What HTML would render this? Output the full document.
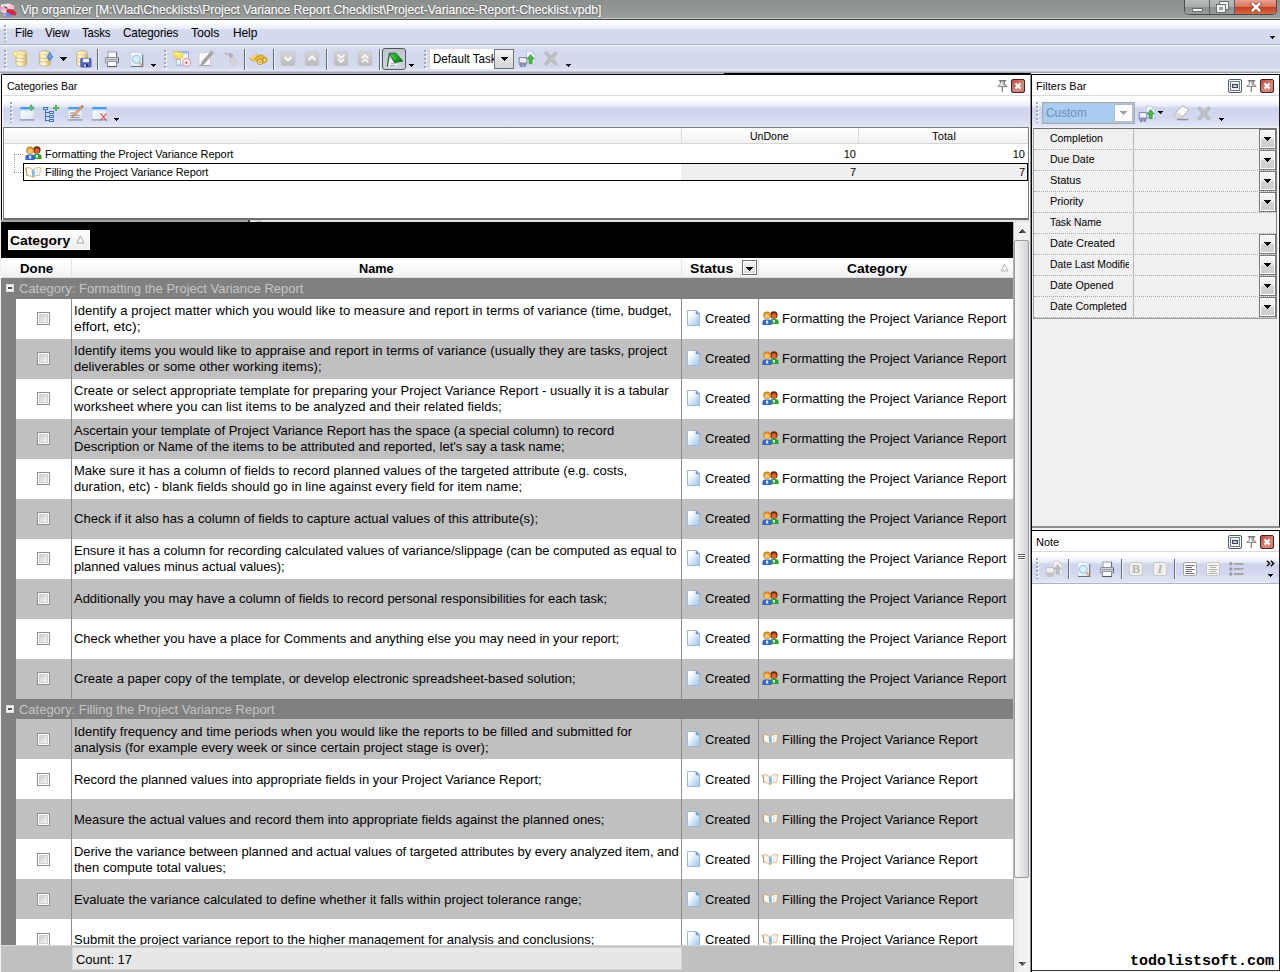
<!DOCTYPE html>
<html><head><meta charset="utf-8"><title>Vip organizer</title>
<style>
*{box-sizing:border-box;margin:0;padding:0}
html,body{width:1280px;height:972px;overflow:hidden}
body{position:relative;background:#f0f0f0;font-family:"Liberation Sans",sans-serif;font-size:11px;color:#000}
svg{display:block}
.tri,.tri7,.tri7g{position:absolute;background:#000}
.tri{width:5px;height:3px;clip-path:polygon(0 0,5px 0,5px 1px,4px 1px,4px 2px,3px 2px,3px 3px,2px 3px,2px 2px,1px 2px,1px 1px,0 1px)}
.tri7,.tri7g{width:7px;height:4px;clip-path:polygon(0 0,7px 0,7px 1px,6px 1px,6px 2px,5px 2px,5px 3px,4px 3px,4px 4px,3px 4px,3px 3px,2px 3px,2px 2px,1px 2px,1px 1px,0 1px)}
.tri7g{background:#a0a0a0}
.grip{position:absolute;width:3px;background:repeating-linear-gradient(to bottom,#a2a8c2 0,#a2a8c2 2px,transparent 2px,transparent 4px) 0 0/2px 100% no-repeat,repeating-linear-gradient(to bottom,transparent 0,transparent 1px,#fff 1px,#fff 3px,transparent 3px,transparent 4px) 1px 0/2px 100% no-repeat}
.ic{position:absolute}
.sep{position:absolute;width:1px;background:#606880;box-shadow:1px 0 0 #f6f7fc}

/* title */
#title{position:absolute;left:0;top:0;width:1280px;height:20px;background:linear-gradient(to bottom,#898e8d 0,#9b9f9e 18px,#c4c8c8 18px,#c4c8c8 19px,#454747 19px)}
#title .appico{position:absolute;left:0;top:1px}
#title .tt{position:absolute;left:21px;top:2px;-webkit-text-stroke:0.25px #fff;font-size:13px;line-height:16px;color:#fff;white-space:nowrap;text-shadow:0 0 2px #444,0 1px 1px #555}
.winbtns{position:absolute;left:1184px;top:0;width:93px;height:15px;border:1px solid #4c4e4e;border-top:none;border-radius:0 0 5px 5px;overflow:hidden;background:#a4a8a8}
.wb{position:absolute;top:0;height:14px}
.wb.min{left:0;width:25px;background:linear-gradient(to bottom,#b8bcbc 0,#a8acac 7px,#8c9090 7px,#9a9e9e 14px);border-right:1px solid #606464}
.wb.min i{position:absolute;left:7px;top:8px;width:11px;height:4px;background:#f4f4f4;border:1px solid #6c7070}
.wb.rest{left:25px;width:25px;background:linear-gradient(to bottom,#b8bcbc 0,#a8acac 7px,#8c9090 7px,#9a9e9e 14px);border-right:1px solid #606464}
.wb.rest i{position:absolute;border:2px solid #f4f4f4;outline:1px solid #6c7070}
.wb.rest i.a{left:10px;top:2px;width:8px;height:7px}
.wb.rest i.b{left:7px;top:5px;width:8px;height:7px;background:#9ca0a0}
.wb.cls{left:50px;width:42px;background:linear-gradient(to bottom,#e8a090 0,#d8705a 7px,#c43c1c 7px,#d86a48 14px)}
.wb.cls svg{position:absolute;left:15px;top:2px}

/* menu */
#menu{position:absolute;left:0;top:20px;width:1280px;height:26px;background:linear-gradient(to bottom,#ffffff 0,#fafbfe 3px,#eceff9 8px,#d4d9ee 10px,#d4d9ee 24px,#aab0c6 24px,#aab0c6 25px,#f8f9fd 25px)}
.mi{position:absolute;top:5px;font-size:13px;line-height:16px;letter-spacing:-0.1px;white-space:nowrap}

/* toolbar */
#tbar{position:absolute;left:0;top:46px;width:1280px;height:28px;background:linear-gradient(to bottom,#dfe3f3 0,#d4d9ee 4px,#d4d9ee 21px,#e6e9f6 25px,#a0a4b4 26px,#a0a4b4 27px,#f0f0f4 27px)}
.pressed{position:absolute;width:24px;height:22px;border:1px solid #50545c;border-radius:3px;background:linear-gradient(to bottom,#c0c4d0,#d0d6e0);padding:0}
.combo1{position:absolute;left:430px;top:3px;width:84px;height:20px;background:#fff;overflow:hidden}
.combo1 span{position:absolute;left:3px;top:2px;font-size:13px;line-height:16px;white-space:nowrap}
.cbtn{position:absolute;left:64px;top:0;width:20px;height:20px;border:1px solid #707478;background:linear-gradient(to bottom,#f4f4f4,#d4d4d4)}

/* panels */
.panel{position:absolute;background:#fff;border:1px solid #000;border-right-color:#1c1c1c;border-bottom-color:#6c6c6c}
.phead{position:absolute;left:0;top:0;right:0;height:21px;background:#fff;border-bottom:1px solid #d9d9dd}
.pt{position:absolute;left:4px;top:5px;font-size:11px;line-height:13px;white-space:nowrap}
.pin,.pclose,.pmax{position:absolute;top:4px;width:14px;height:14px}
.pin{width:12px;top:5px}
.pclose{background:linear-gradient(135deg,#bc4c48,#d48c80 65%,#cc7468);border:1px solid #4e211a;border-radius:2px}
.pclose svg{margin:0}
.pmax{border:1px solid #505c6c;border-radius:2px;background:#f4f6fa;box-shadow:inset 0 0 0 1px #fff,inset 0 0 0 2px #6c7888}
.pmax svg{margin:0}
.ptool{position:absolute;left:0;top:21px;right:0;height:31px;background:linear-gradient(to bottom,#ffffff 0,#ffffff 4px,#e7ecf7 10px,#d0d5ee 12px,#d3d8ef 22px,#e3e8f6 31px)}

#catp{left:2px;top:74px;width:1029px;height:146px;border-right-color:#fff;border-left-color:#fff;border-bottom:none;box-shadow:-1px 0 0 #000,0 -1px 0 #b8b8bc}
.ctree{position:absolute;left:0;top:52px;width:1026px;height:93px;border:1px solid #7c7c7c;border-bottom:2px solid #707070;background:#fff}
.chead{position:absolute;left:0;top:0;right:0;height:16px;background:linear-gradient(to bottom,#ffffff,#f1f1f1);border-bottom:1px solid #d4d4d4}
.chead div{position:absolute;top:0;height:15px;font-size:11px;line-height:17px;text-align:center;border-right:1px solid #dcdcdc}
.chead .c1{left:0;width:678px}
.chead .c2{left:678px;width:177px}
.chead .c2 span{position:absolute;left:68px;top:0}
.chead .c3 span{position:absolute;left:73px;top:0}
.chead .c3{left:855px;width:171px;border-right:none}
.trow{position:absolute;left:19px;right:0;height:18px}
.trow.r1{top:17px}
.trow.r2{top:35px;border:1px solid #000}
.trow .ti{position:absolute;left:2px;top:1px}
.trow.r2 .ti{left:1px;top:1px}
.trow .tx{position:absolute;left:22px;top:3px;font-size:11px;line-height:13px;white-space:nowrap}
.trow.r2 .tx{left:21px;top:2px}
.trow .n1,.trow .n2{position:absolute;top:3px;font-size:11px;line-height:13px;text-align:right;width:60px}
.trow .n1{left:773px}
.trow .n2{left:942px}
.trow.r2 .n1,.trow.r2 .n2{top:2px;margin-left:-1px}
.selbg{position:absolute;left:657px;top:0;right:0;bottom:0;background:#efefef}
.tl1{position:absolute;left:10px;top:26px;width:9px;border-top:1px dotted #a0a0a0}
.tl2{position:absolute;left:10px;top:26px;height:18px;border-left:1px dotted #a0a0a0}
.tl3{position:absolute;left:10px;top:44px;width:9px;border-top:1px dotted #a0a0a0}

/* grid */
#grid{position:absolute;left:2px;top:220px;width:1029px;height:752px;background:#c0c0c0;overflow:hidden;background:linear-gradient(to right,#a4a4a4 0,#a4a4a4 246px,#404040 246px,#404040 248px,#e8e8ec 248px,#c8c8cc 258px,#e3e3e8 260px) 0 0/100% 2px no-repeat,#c0c0c0}
.gbar{position:absolute;left:0;top:2px;width:1011px;height:36px;background:#000}
.gbox{position:absolute;left:6px;top:8px;width:82px;height:20px;background:linear-gradient(to bottom,#fff,#ececec);border:1px solid #fff}
.gbox span{position:absolute;left:1px;top:2px;font-size:13px;font-weight:bold;line-height:16px}
.gbox svg{position:absolute;left:67px;top:4px}
.ghead{position:absolute;left:0;top:38px;width:1011px;height:20px;background:linear-gradient(to bottom,#ffffff,#fafafa 50%,#f0f0f0);border-bottom:1px solid #dcdcdc}
.ghead .h{position:absolute;top:0;height:19px;font-size:13px;font-weight:bold;line-height:19px;text-align:center;border-right:1px solid #e4e4e4}
.hd{left:0;width:70px}
.hn{left:70px;width:610px}
.hs{left:680px;width:77px}
.hc{left:757px;width:254px;border-right:none !important}
.hd span{position:absolute;left:18px;top:2px;line-height:17px}
.hn span{position:absolute;left:287px;top:2px;line-height:17px}
.hs span{position:absolute;left:8px;top:2px;line-height:17px}
.hc span{position:absolute;left:88px;top:2px;line-height:17px}
.fbtn{position:absolute;left:60px;top:2px;width:15px;height:15px;border:1px solid #707070;background:linear-gradient(to bottom,#f4f4f4,#dcdcdc);box-shadow:inset 0 0 0 1px #fff}
.srt{position:absolute;left:241px;top:5px}
.gbody{position:absolute;left:0;top:0;width:1011px;height:726px;overflow:hidden}
.grp{position:absolute;left:0;width:1011px;height:21px;background:#808080;color:#c4c4c4;font-size:13px;line-height:20px}
.grp span{position:absolute;left:17px;top:1px;white-space:nowrap}
.minus{position:absolute;left:4px;top:6px;width:8px;height:8px;background:#f4f4f4;border:1px solid #dcdcdc}
.minus i{position:absolute;left:1px;top:2px;width:4px;height:2px;background:#505050}
.row{position:absolute;left:0;width:1011px;height:40px;background:#fff;border-left:14px solid #808080}
.row.alt{background:#c0c0c0}
.row>div{position:absolute;top:0;height:40px;border-right:1px solid #8c8c8c}
.cd{left:0;width:56px}
.cn{left:56px;width:610px}
.cs{left:666px;width:77px}
.cc{left:743px;width:254px;border-right:none !important}
.cb{position:absolute;left:21px;top:13px;width:13px;height:13px;border:1px solid #8e8f8f;background:linear-gradient(135deg,#cccccc 20%,#f6f6f6 80%);box-shadow:inset 0 0 0 1px #fff,inset 0 0 0 2px #cfcfcf}
.nt{position:absolute;left:2px;top:0;height:40px;display:flex;flex-direction:column;justify-content:center;font-size:13px;line-height:16px;white-space:nowrap}
.nt br{display:none}
.ln{display:block}
.cs .doc{position:absolute;left:5px;top:11px}
.cs span{position:absolute;left:23px;top:12px;font-size:13px;line-height:16px}
.cc .ci{position:absolute;left:3px;top:12px}
.cc span{position:absolute;left:23px;top:12px;font-size:13px;line-height:16px;white-space:nowrap}
.gfoot{position:absolute;left:0;top:725px;width:1011px;height:27px;background:#c0c0c0;border-top:1px solid #d8d8d8}
.cnt{position:absolute;left:70px;top:1px;width:610px;height:23px;background:#e6e8e8;border:1px solid #d4d4d4;font-size:13px;line-height:23px;padding-left:3px}
.vsb{position:absolute;left:1011px;top:2px;width:18px;height:750px;background:linear-gradient(to right,#e8e8e8,#f2f2f2 30%,#f0f0f0);border-left:1px solid #b4b4b4}
.vsb .up,.vsb .dn{position:absolute;left:5px;width:7px;height:4px}
.vsb .up{top:7px;background:linear-gradient(to right,#202020,#707070);clip-path:polygon(3px 0,4px 0,4px 1px,5px 1px,5px 2px,6px 2px,6px 3px,7px 3px,7px 4px,0 4px,0 3px,1px 3px,1px 2px,2px 2px,2px 1px,3px 1px)}
.vsb .dn{top:740px;background:linear-gradient(to right,#303030,#808080);clip-path:polygon(0 0,7px 0,7px 1px,6px 1px,6px 2px,5px 2px,5px 3px,4px 3px,4px 4px,3px 4px,3px 3px,2px 3px,2px 2px,1px 2px,1px 1px,0 1px)}
.thumb{position:absolute;left:0;top:18px;width:15px;height:638px;border:1px solid #9a9a9a;border-radius:2px;background:linear-gradient(to right,#f6f6f6,#e6e6e8 50%,#d2d2d8)}
.thumb .gr{position:absolute;left:3px;top:313px;width:7px}
.thumb .gr i{display:block;height:1px;background:#606060;margin-bottom:1px;box-shadow:0 1px 0 #fff}

/* filters */
#filp{left:1031px;top:74px;width:249px;height:454px;background:#f0f0f0;border-bottom:2px solid #909090;box-shadow:-1px 0 0 #8c8c8c,inset -1px 0 0 #fff}
.combo2{position:absolute;left:10px;top:6px;width:93px;height:22px;border:1px solid #a4acb4;box-shadow:inset 0 0 0 1px #b4c4d8;background:#a8ccf2}
.combo2 span{position:absolute;left:3px;top:2px;font-size:13px;line-height:16px;color:#7390b2}
.cbtn2{position:absolute;left:71px;top:1px;width:19px;height:18px;background:#fcfcfc;border:1px solid #b8bcc0}
.fgrid{position:absolute;left:1px;top:53px;width:244px;height:191px;border:1px solid #9c9c9c;border-top:1px solid #707070;border-right-color:#808080;background:#f0f0f0}
.frow{position:absolute;left:0;width:242px;height:21px;border-bottom:1px dotted #a8a8a8}
.fl{position:absolute;left:16px;top:3px;width:79px;overflow:hidden;font-size:11px;line-height:13px;white-space:nowrap}
.fb{position:absolute;left:225px;top:0;width:17px;height:20px;border:1px solid #787878;background:linear-gradient(to bottom,#f6f6f6 0,#ececec 50%,#d4d4d4 50%,#cccccc);box-shadow:inset 0 0 0 1px #fff}
.fsep{position:absolute;left:99px;top:0;width:1px;height:189px;background:#b8b8b8}

/* note */
#notep{left:1031px;top:530px;width:249px;height:441px;border-bottom-color:#404040;box-shadow:-1px 0 0 #8c8c8c}
.nbody{position:absolute;left:0;top:52px;right:0;bottom:0;background:#fff;border-top:1px solid #b0b4c4}
.chev{position:absolute;left:234px;top:9px}
.wm{position:absolute;left:98px;top:422px;font-family:"Liberation Mono",monospace;font-weight:bold;font-size:15px;line-height:17px;white-space:nowrap}
#splitgrip{position:absolute;left:1017px;top:555px;width:7px}
#splitgrip i{display:none}

#lstrip{position:absolute;left:1px;top:220px;width:1px;height:752px;background:linear-gradient(to bottom,#a8a8a8 0,#a8a8a8 2px,#000 2px,#000 38px,#f8f8f8 38px,#f8f8f8 58px,#808080 58px,#808080 725px,#c4c4c4 725px)}
.g2 .nt{top:1px}
.g2 .cb{top:14px}
.g2 .cs .doc{top:12px}
.g2 .cs span,.g2 .cc span{top:13px}
.g2 .cc .ci{top:13px}
#tline{position:absolute;left:724px;top:73px;width:307px;height:1px;background:#000}
#vline{position:absolute;left:1030px;top:74px;width:2px;height:898px;background:linear-gradient(to right,#8c8c8c 0,#8c8c8c 1px,#000 1px)}

</style></head>
<body>
<svg width="0" height="0" style="position:absolute"><defs><linearGradient id="gCyl" x1="0" y1="0" x2="1" y2="0"><stop offset="0" stop-color="#e9d9a0"/><stop offset="0.3" stop-color="#fdf9e4"/><stop offset="0.65" stop-color="#f3e3a8"/><stop offset="1" stop-color="#c9aa62"/></linearGradient><linearGradient id="gTop" x1="0" y1="0" x2="1" y2="0"><stop offset="0" stop-color="#fffbe8"/><stop offset="1" stop-color="#ecd998"/></linearGradient><linearGradient id="gD" x1="0" y1="0" x2="1" y2="1"><stop offset="0.25" stop-color="#ffffff"/><stop offset="1" stop-color="#98c4ec"/></linearGradient><linearGradient id="gBtn" x1="0" y1="0" x2="0" y2="1"><stop offset="0" stop-color="#d6d6d6"/><stop offset="0.5" stop-color="#c6c6c6"/><stop offset="1" stop-color="#bcbcbc"/></linearGradient><linearGradient id="gGrn" x1="0" y1="0" x2="1" y2="1"><stop offset="0" stop-color="#3cc43c"/><stop offset="1" stop-color="#0c7c14"/></linearGradient><linearGradient id="gPg" x1="0" y1="0" x2="1" y2="1"><stop offset="0" stop-color="#ffffff"/><stop offset="1" stop-color="#dce6f2"/></linearGradient></defs></svg>
<div id="title"><div class="appico"><svg width="17" height="17" viewBox="0 0 17 17"><path d="M1 3.5 L9 2.5 L14.5 5 L13 9 L5 13 L0.5 10 Z" fill="#f6dcea"/><path d="M0.5 6 L4 5.5 L5 9.5 L1 10 Z" fill="#f0a8bc"/><path d="M3.5 5 L7.5 6.2 L6 8.2 Z" fill="#5c5060"/><path d="M7 7.6 L13 8.4 L16.4 12 L15.6 14.4 L10 13.4 L6.2 11 Z" fill="#d42c3c"/><path d="M9.4 4.4 L14 5 L14.6 7.6 L10.6 7.6 Z" fill="#f4b8c0"/><path d="M3 12 L8 11.6 L12.4 14.4 L10 15.8 L5 15.6 Z" fill="#7c84d4"/><path d="M3.4 12.4 L6 13.6 L4.6 15.2 Z" fill="#d8c8f0"/></svg></div><span class="tt" style="display:inline-block;transform-origin:0 0;transform:scaleX(0.9331);">Vip organizer [M:\Vlad\Checklists\Project Variance Report Checklist\Project-Variance-Report-Checklist.vpdb]</span><div class="winbtns"><div class="wb min"><i></i></div><div class="wb rest"><i class="a"></i><i class="b"></i></div><div class="wb cls"><svg width="12" height="10" viewBox="0 0 12 10"><path d="M2.8 2 L9.2 8.2 M9.2 2 L2.8 8.2" stroke="#7c3424" stroke-opacity="0.75" stroke-width="4.2" stroke-linecap="square"/><path d="M2.8 2 L9.2 8.2 M9.2 2 L2.8 8.2" stroke="#fff" stroke-width="2.7" stroke-linecap="square"/></svg></div></div></div>
<div id="menu"><div class="grip" style="left:4px;top:5px;height:17px"></div><span class="mi" style="display:inline-block;transform-origin:0 0;transform:scaleX(0.8782);left:15.0px;">File</span><span class="mi" style="display:inline-block;transform-origin:0 0;transform:scaleX(0.8872);left:45.0px;">View</span><span class="mi" style="display:inline-block;transform-origin:0 0;transform:scaleX(0.8606);left:82.4px;">Tasks</span><span class="mi" style="display:inline-block;transform-origin:0 0;transform:scaleX(0.8938);left:123.0px;">Categories</span><span class="mi" style="display:inline-block;transform-origin:0 0;transform:scaleX(0.9486);left:191.3px;">Tools</span><span class="mi" style="display:inline-block;transform-origin:0 0;transform:scaleX(0.9196);left:232.5px;">Help</span><div class="tri" style="left:1270px;top:16px"></div></div>
<div id="tbar"><div class="grip" style="left:4px;top:4px;height:19px"></div><div class="ic" style="left:11px;top:3px"><svg width="18" height="19" viewBox="0 0 18 19"><path d="M4.8 4 C4.8 1 15.6 1 15.6 4 V15 C15.6 18 4.8 18 4.8 15 Z" fill="url(#gCyl)" stroke="#c3a55e" stroke-opacity="0.75" stroke-width="0.8"/><ellipse cx="10.2" cy="4" rx="5.1" ry="2" fill="url(#gTop)" stroke="#cdb270" stroke-opacity="0.8" stroke-width="0.6"/><path d="M4.8 8 C6.8 10 13.6 10 15.6 8 M4.8 11.6 C6.8 13.6 13.6 13.6 15.6 11.6" fill="none" stroke="#cbb070" stroke-opacity="0.75" stroke-width="0.9"/><path d="M4.5 1 L5.5 4.2 L9 5 L5.5 6 L4.5 9 L3.5 6 L0.3 5 L3.5 4.2 Z" fill="#fbe94a" stroke="#f0d040" stroke-opacity="0.7" stroke-width="0.6"/><circle cx="4.5" cy="5" r="1.3" fill="#fffad0"/></svg></div><div class="ic" style="left:37px;top:3px"><svg width="18" height="19" viewBox="0 0 18 19"><path d="M2.4 4 C2.4 1 13.2 1 13.2 4 V15 C13.2 18 2.4 18 2.4 15 Z" fill="url(#gCyl)" stroke="#c3a55e" stroke-opacity="0.75" stroke-width="0.8"/><ellipse cx="7.8" cy="4" rx="5.1" ry="2" fill="url(#gTop)" stroke="#cdb270" stroke-opacity="0.8" stroke-width="0.6"/><path d="M2.4 8 C4.4 10 11.2 10 13.2 8 M2.4 11.6 C4.4 13.6 11.2 13.6 13.2 11.6" fill="none" stroke="#cbb070" stroke-opacity="0.75" stroke-width="0.9"/><path d="M12.8 3 L16 8.3 H14.2 V11 H11.6 V8.3 H10 Z" fill="#6a9ae0" stroke="#3c68b8" stroke-width="0.6"/></svg></div><div class="tri7" style="left:60px;top:11px"></div><div class="ic" style="left:75px;top:3px"><svg width="18" height="19" viewBox="0 0 18 19"><path d="M1.6 4 C1.6 1 12.4 1 12.4 4 V15 C12.4 18 1.6 18 1.6 15 Z" fill="url(#gCyl)" stroke="#c3a55e" stroke-opacity="0.75" stroke-width="0.8"/><ellipse cx="7.0" cy="4" rx="5.1" ry="2" fill="url(#gTop)" stroke="#cdb270" stroke-opacity="0.8" stroke-width="0.6"/><path d="M1.6 8 C3.6 10 10.4 10 12.4 8 M1.6 11.6 C3.6 13.6 10.4 13.6 12.4 11.6" fill="none" stroke="#cbb070" stroke-opacity="0.75" stroke-width="0.9"/><rect x="5.8" y="9.4" width="10.2" height="8.6" rx="0.6" fill="#5c68c4" stroke="#40489c" stroke-width="0.8"/><rect x="7.8" y="9.6" width="6.2" height="3.6" fill="#eef0fa"/><rect x="8.6" y="14.8" width="4.4" height="3.2" fill="#30387c"/><rect x="9.2" y="15.4" width="1.6" height="2.4" fill="#e0e4f4"/></svg></div><div class="sep" style="left:97px;top:3px;height:21px"></div><div class="ic" style="left:104px;top:3px"><svg width="16" height="19" viewBox="0 0 16 19"><rect x="4" y="3" width="8.4" height="5.4" fill="#fdfdfd" stroke="#8c94a0" stroke-width="0.9"/><path d="M1.4 8.6 H14.4 V14 H1.4 Z" fill="#dfe1e6" stroke="#808894" stroke-width="0.9"/><path d="M1.8 10.6 H14" stroke="#a0a6b0" stroke-width="1.3"/><path d="M12.6 3 V8 M14.5 8.6 V14" stroke="#5c646c" stroke-width="0.9"/><rect x="3.6" y="12.4" width="9" height="5" fill="#fff" stroke="#7c848e" stroke-width="0.9"/><path d="M3.4 17.5 H12.8" stroke="#505860" stroke-width="1.1"/></svg></div><div class="ic" style="left:129px;top:3px"><svg width="16" height="19" viewBox="0 0 16 19"><path d="M1.8 3.2 H10 L13.6 6.2 V17.4 H1.8 Z" fill="url(#gPg)" stroke="#c0c8d8" stroke-width="0.8"/><path d="M13.7 5.5 V17.5 H2" stroke="#687080" stroke-width="1.1" fill="none"/><circle cx="7.3" cy="10.3" r="3.9" fill="#d6ecf8" fill-opacity="0.9" stroke="#a0cce8" stroke-width="1.3"/><path d="M10.2 13.4 L13 16.8" stroke="#e0a868" stroke-width="1.7"/></svg></div><div class="tri" style="left:151px;top:18px"></div><div class="grip" style="left:164px;top:4px;height:19px"></div><div class="ic" style="left:173px;top:3px"><svg width="19" height="19" viewBox="0 0 19 19"><rect x="5.5" y="2.6" width="10" height="13.6" fill="#fafcff" stroke="#8ca8d8" stroke-width="0.9"/><rect x="5.5" y="2.6" width="10" height="2.2" fill="#9cc0f0"/><path d="M1 2.4 H5 L6 3.8 H9.8 V9.2 H1 Z" fill="#f8e264" stroke="#e4c444" stroke-width="0.8"/><path d="M1.4 4.8 H9.4" stroke="#fdf6b0" stroke-width="1"/><rect x="3.2" y="10.4" width="4.4" height="5.6" fill="#eef3fc" stroke="#8ca8d8" stroke-width="0.7"/><circle cx="13.6" cy="13.4" r="3.9" fill="#fef8fa" stroke="#eca4b4" stroke-width="1.4"/><circle cx="13.4" cy="13.6" r="1.2" fill="#d84860"/></svg></div><div class="ic" style="left:197px;top:3px"><svg width="18" height="19" viewBox="0 0 18 19"><rect x="2" y="3.6" width="11.4" height="12.8" fill="#f8f8f8" stroke="#cfcfcf" stroke-width="0.9"/><path d="M2 16.6 H13.6" stroke="#a8a8a8" stroke-width="1"/><path d="M14.6 2 L16.6 3.8 L7 15 L4 16 L4.8 13 Z" fill="#a4a4a4" stroke="#8e8e8e" stroke-width="0.6"/><path d="M14 3 L15.8 4.6" stroke="#d0d0d0" stroke-width="0.9"/></svg></div><div class="ic" style="left:221px;top:3px"><svg width="18" height="19" viewBox="0 0 18 19"><path d="M2.5 4.5 L5 2.8 L7 4.2 L5.5 6.8 Z" fill="#c0c0c0"/><path d="M6.5 5 L9.5 3.4 L12.5 6 L11 9 L8.5 8.6 Z" fill="#b4b4b4"/><path d="M8.6 9.4 L14 8.4 L15.4 15.4 L10.4 16.8 Z" fill="#dcdcdc" stroke="#c4c4c4" stroke-width="0.8"/><path d="M10.2 11 L13.6 10.4 M10.8 13.4 L14.2 12.8" stroke="#c8c8c8" stroke-width="0.8"/></svg></div><div class="sep" style="left:244px;top:3px;height:21px"></div><div class="ic" style="left:249px;top:3px"><svg width="19" height="19" viewBox="0 0 19 19"><path d="M0.6 10 L7.4 5.4 L11 7.4 L4.4 12.4 Z" fill="#f2cc54" stroke="#c4962a" stroke-width="0.7"/><path d="M5.6 9.2 L12.4 5.6 L18 9.6 L16.4 13.6 L10.4 15 Z" fill="#e8b838" stroke="#b8881c" stroke-width="0.7"/><path d="M2 9.6 L7.6 6" stroke="#fbe890" stroke-width="1.2"/><ellipse cx="10.8" cy="12.8" rx="2.6" ry="2.8" fill="#f8e490" stroke="#b48418" stroke-width="0.8"/><ellipse cx="15.8" cy="11" rx="1.9" ry="2.6" fill="#f4d870" stroke="#b48418" stroke-width="0.8"/><ellipse cx="10.8" cy="12.8" rx="1.1" ry="1.3" fill="#d8a830"/></svg></div><div class="sep" style="left:273px;top:3px;height:21px"></div><div class="ic" style="left:280px;top:3px"><svg width="16" height="19" viewBox="0 0 16 19"><rect x="1.2" y="3" width="13.6" height="13.4" rx="2" fill="url(#gBtn)" stroke="#c2c2c2" stroke-width="0.8"/><path d="M4.6 8 L8 11.4 L11.4 8" stroke="#fafafa" stroke-width="2.1" fill="none"/></svg></div><div class="ic" style="left:304px;top:3px"><svg width="16" height="19" viewBox="0 0 16 19"><rect x="1.2" y="3" width="13.6" height="13.4" rx="2" fill="url(#gBtn)" stroke="#c2c2c2" stroke-width="0.8"/><path d="M4.6 11 L8 7.6 L11.4 11" stroke="#fafafa" stroke-width="2.1" fill="none"/></svg></div><div class="sep" style="left:326px;top:3px;height:21px"></div><div class="ic" style="left:333px;top:3px"><svg width="16" height="19" viewBox="0 0 16 19"><rect x="1.2" y="3" width="13.6" height="13.4" rx="2" fill="url(#gBtn)" stroke="#c2c2c2" stroke-width="0.8"/><path d="M4.8 5.8 L8 9 L11.2 5.8 M4.8 9.8 L8 13 L11.2 9.8" stroke="#fafafa" stroke-width="1.8" fill="none"/></svg></div><div class="ic" style="left:357px;top:3px"><svg width="16" height="19" viewBox="0 0 16 19"><rect x="1.2" y="3" width="13.6" height="13.4" rx="2" fill="url(#gBtn)" stroke="#c2c2c2" stroke-width="0.8"/><path d="M4.8 9.4 L8 6.2 L11.2 9.4 M4.8 13.4 L8 10.2 L11.2 13.4" stroke="#fafafa" stroke-width="1.8" fill="none"/></svg></div><div class="sep" style="left:379px;top:3px;height:21px"></div><div class="pressed" style="left:382px;top:2px"><svg width="22" height="20" viewBox="0 0 22 20"><path d="M5.6 8 L11.6 13.4 L15.4 15.2 L13 17 L4.4 17.6 Z" fill="#f2f6f6" fill-opacity="0.9"/><path d="M8.2 14.6 L13.4 14 M7 16.6 L12 16.2" stroke="#8c98a4" stroke-width="0.8"/><path d="M6.4 4.4 L4.3 17.6" stroke="#1c4c1c" stroke-width="1.1" fill="none"/><path d="M6.4 4.3 L12.6 4 L19.8 12 L11.6 13.6 Z" fill="url(#gGrn)" stroke="#106418" stroke-width="0.9"/><path d="M8.2 5.6 L12.6 10.6" stroke="#4cd04c" stroke-width="2" stroke-opacity="0.6"/></svg></div><div class="tri" style="left:409px;top:18px"></div><div class="grip" style="left:424px;top:4px;height:19px"></div><div class="combo1"><span style="display:inline-block;transform-origin:0 0;transform:scaleX(0.8906);">Default Task</span><div class="cbtn"><div class="tri7" style="left:6px;top:7px"></div></div></div><div class="ic" style="left:518px;top:3px"><svg width="18" height="19" viewBox="0 0 18 19"><path d="M8.6 2 H14.2 L17 4.8 V15 H10 L8.6 12 Z" fill="#eef4fb" stroke="#b4c0d4" stroke-width="0.7"/><path d="M14.2 2 V4.8 H17" fill="none" stroke="#b4c0d4" stroke-width="0.7"/><path d="M12.6 5.6 L16.2 10 H14.2 V14.4 H11 V10 H9 Z" fill="#4cb84c" stroke="#2c9038" stroke-width="0.7"/><path d="M1.2 8.6 H8.8 V14.4 L7 17.6 H5.8 V14.8 H4 V17.6 H2.6 L1.2 14.4 Z" fill="#f0f1f8" stroke="#646c9c" stroke-opacity="0.9" stroke-width="0.9"/><path d="M1.6 13.6 L2.8 17.2 H3.8 V14.4 H6 V17.2 H6.8 L8.4 13.6" fill="#646c9c" fill-opacity="0.8"/></svg></div><div class="ic" style="left:543px;top:2px"><svg width="16" height="19" viewBox="0 0 16 19"><path d="M3.4 5.4 L12.6 15.6 M12.6 5.4 L3.4 15.6" stroke="#9c9c9c" stroke-opacity="0.55" stroke-width="3.8" stroke-linecap="round"/><path d="M3.4 5.4 L12.6 15.6 M12.6 5.4 L3.4 15.6" stroke="#c0c0c0" stroke-width="2.2" stroke-linecap="round"/></svg></div><div class="tri" style="left:566px;top:18px"></div></div>
<div id="catp" class="panel"><div class="phead"><span class="pt" style="display:inline-block;transform-origin:0 0;transform:scaleX(0.9581);">Categories Bar</span><div class="pin" style="left:994px"><svg width="12" height="13" viewBox="0 0 12 13"><path d="M3.4 1 V3.8 L0.8 6.4 H10.2 L7.6 3.8 V1 Z" fill="#f4f4f4" stroke="#787878" stroke-width="0.9"/><path d="M6.3 1.4 V4.2 L8.2 6" stroke="#a0a0a0" stroke-width="1.3" fill="none"/><path d="M1.8 0.7 H9.2" stroke="#6c6c6c" stroke-width="1.2" fill="none"/><path d="M5.4 6.8 L5.1 12" stroke="#6c6c6c" stroke-width="1.1" fill="none"/></svg></div><div class="pclose" style="left:1008px"><svg width="12" height="12" viewBox="0 0 12 12"><path d="M3.5 3.5 L8.5 8.5 M8.5 3.5 L3.5 8.5" stroke="#fff" stroke-width="2"/></svg></div></div><div class="ptool"><div class="grip" style="left:7px;top:6px;height:21px"></div><div class="ic" style="left:17px;top:8px"><svg width="16" height="18" viewBox="0 0 16 18"><rect x="0.4" y="3.2" width="13.6" height="12.4" fill="url(#gPg)" stroke="#d4dae4" stroke-width="0.7"/><rect x="0.2" y="3" width="14.0" height="2.5" fill="#4a9cea"/><path d="M0.2 6 H14.2" stroke="#a8d0f4" stroke-width="0.8"/><path d="M0 15.9 H14.4" stroke="#8890a0" stroke-width="1.2"/><path d="M11.2 0.8 V6.6 M8.6 3.7 H14" stroke="#38a048" stroke-width="2"/><path d="M11.2 1.2 V6.2 M9 3.7 H13.6" stroke="#78d080" stroke-width="0.7"/></svg></div><div class="ic" style="left:40px;top:8px"><svg width="17" height="18" viewBox="0 0 17 18"><rect x="0.5" y="3.5" width="4" height="2" fill="#d0e0f8" stroke="#4078c0" stroke-width="1"/><path d="M2.5 6 V17.5 M2.5 8.5 H6 M2.5 12.5 H6 M2.5 16.5 H6" stroke="#4078c0" stroke-width="1" fill="none"/><rect x="6.5" y="7.5" width="4" height="2" fill="#d0e0f8" stroke="#4078c0" stroke-width="1"/><rect x="6.5" y="11.5" width="4" height="2" fill="#d0e0f8" stroke="#4078c0" stroke-width="1"/><rect x="6.5" y="15.5" width="4" height="2" fill="#d0e0f8" stroke="#4078c0" stroke-width="1"/><path d="M13 1 V7 M10 4 H16" stroke="#38a048" stroke-width="2"/><path d="M13 1.5 V6.5 M10.5 4 H15.5" stroke="#78d080" stroke-width="0.7"/></svg></div><div class="ic" style="left:65px;top:8px"><svg width="17" height="18" viewBox="0 0 17 18"><rect x="0.4" y="3.2" width="13.6" height="12.4" fill="url(#gPg)" stroke="#d4dae4" stroke-width="0.7"/><rect x="0.2" y="3" width="14.0" height="2.5" fill="#4a9cea"/><path d="M0.2 6 H14.2" stroke="#a8d0f4" stroke-width="0.8"/><path d="M0 15.9 H14.4" stroke="#8890a0" stroke-width="1.2"/><path d="M2 9 H6 M2 11.4 H11.6 M2 13.6 H11.6" stroke="#7888a8" stroke-width="0.9"/><path d="M14 1.4 L15.4 2.8 L6.4 12.2 L4 13 L4.8 10.8 Z" fill="#e0a868" stroke="#b87040" stroke-width="0.5"/><path d="M13 2.2 L14.6 3.6 L15.6 2.6 L14 1.2 Z" fill="#c05040"/></svg></div><div class="ic" style="left:89px;top:8px"><svg width="17" height="18" viewBox="0 0 17 18"><rect x="0.4" y="3.2" width="14.0" height="12.4" fill="url(#gPg)" stroke="#d4dae4" stroke-width="0.7"/><rect x="0.2" y="3" width="14.4" height="2.5" fill="#4a9cea"/><path d="M0.2 6 H14.6" stroke="#a8d0f4" stroke-width="0.8"/><path d="M0 15.9 H14.8" stroke="#8890a0" stroke-width="1.2"/><path d="M8.4 9.4 L14.6 16.6 M14.6 9.4 L8.4 16.6" stroke="#e05c5c" stroke-width="1.3"/></svg></div><div class="tri" style="left:111px;top:22px"></div></div><div class="ctree"><div class="chead"><div class="c1"></div><div class="c2"><span style="display:inline-block;transform-origin:0 0;transform:scaleX(0.9564);">UnDone</span></div><div class="c3"><span style="letter-spacing:0.150px;">Total</span></div></div><div class="tl1"></div><div class="tl2"></div><div class="tl3"></div><div class="trow r1"><div class="ti"><svg width="17" height="14" viewBox="0 0 17 14"><circle cx="11.9" cy="4" r="3.7" fill="#6a2c10"/><circle cx="12" cy="4.8" r="2.5" fill="#d8642c"/><path d="M7.5 13 V10.6 C7.5 8.4 9.5 8 12 8 C14.5 8 16.6 8.4 16.6 10.6 V13 Z" fill="#2ca02c"/><rect x="10.8" y="9" width="2.2" height="2.6" fill="#dcf0dc"/><circle cx="5" cy="4.4" r="3.8" fill="#d08820"/><circle cx="5.1" cy="5.2" r="2.6" fill="#f2c070"/><path d="M0.4 14 V11.2 C0.4 8.9 2.5 8.6 5 8.6 C7.5 8.6 9.6 8.9 9.6 11.2 V14 Z" fill="#3464cc"/><rect x="4" y="9.6" width="2.2" height="3" fill="#e4ecfa"/></svg></div><span class="tx" style="letter-spacing:-0.044px;">Formatting the Project Variance Report</span><span class="n1">10</span><span class="n2">10</span></div><div class="trow r2"><div class="selbg"></div><div class="ti"><svg width="17" height="14" viewBox="0 0 17 14"><path d="M1 2.8 C3.4 2 5.6 3 8 5.2 L8 12.6 C5.6 10.6 3.8 10.2 2 10.8 Z" fill="#fffbf2" stroke="#d69a58" stroke-width="0.8"/><path d="M8 5.2 C10.4 2.8 13 2 15.6 2.8 L14.6 10.6 C12.4 10.2 10.4 10.6 8 12.6 Z" fill="#ffffff" stroke="#e2a458" stroke-width="0.8"/><path d="M6.6 5.4 L9.6 4.6 L10 10.8 L7.4 12 Z" fill="#7ab6ea" fill-opacity="0.9"/><path d="M10.8 5.2 L13.6 4.2 M10.8 7.2 L13.4 6.4 M10.8 9.2 L13 8.6" stroke="#a8cdf0" stroke-width="0.7"/><path d="M0.9 3 L1.9 10.6" stroke="#b09a66" stroke-width="1"/></svg></div><span class="tx" style="letter-spacing:-0.080px;">Filling the Project Variance Report</span><span class="n1">7</span><span class="n2">7</span></div></div></div>
<div id="grid"><div class="gbar"><div class="gbox"><span style="display:inline-block;transform-origin:0 0;transform:scaleX(1.0681);">Category</span><svg width="9" height="9" viewBox="0 0 9 9"><path d="M4.5 1 L8 8 H1 Z" fill="#fff" stroke="#a0a0a0" stroke-width="1"/></svg></div></div><div class="ghead"><div class="h hd"><span style="display:inline-block;transform-origin:0 0;transform:scaleX(1.0215);">Done</span></div><div class="h hn"><span style="display:inline-block;transform-origin:0 0;transform:scaleX(0.9768);">Name</span></div><div class="h hs"><span style="display:inline-block;transform-origin:0 0;transform:scaleX(1.0897);">Status</span><div class="fbtn"><div class="tri7" style="left:3px;top:6px"></div></div></div><div class="h hc"><span style="display:inline-block;transform-origin:0 0;transform:scaleX(1.0681);">Category</span><svg class="srt" width="9" height="9" viewBox="0 0 9 9"><path d="M4.5 1 L8 8 H1 Z" fill="#fff" stroke="#b0b0b0" stroke-width="1"/></svg></div></div><div class="gbody"><div class="grp" style="top:58px"><div class="minus"><i></i></div><span>Category: Formatting the Project Variance Report</span></div><div class="row" style="top:79px"><div class="cd"><div class="cb"></div></div><div class="cn"><div class="nt"><span class="ln" style="letter-spacing:0.077px;">Identify a project matter which you would like to measure and report in terms of variance (time, budget,</span><span class="ln" style="display:inline-block;transform-origin:0 0;transform:scaleX(1.0758);">effort, etc);</span></div></div><div class="cs"><div class="doc"><svg width="14" height="17" viewBox="0 0 14 17"><path d="M0.5 0.5 H9 L12.5 4 V15.5 H0.5 Z" fill="url(#gD)" stroke="#9cb8dc" stroke-width="1"/><path d="M9 0.5 V4 H12.5 Z" fill="#6c98d0" stroke="#7ca4d8" stroke-width="0.6"/></svg></div><span style="letter-spacing:-0.150px;">Created</span></div><div class="cc"><div class="ci"><svg width="17" height="14" viewBox="0 0 17 14"><circle cx="11.9" cy="4" r="3.7" fill="#6a2c10"/><circle cx="12" cy="4.8" r="2.5" fill="#d8642c"/><path d="M7.5 13 V10.6 C7.5 8.4 9.5 8 12 8 C14.5 8 16.6 8.4 16.6 10.6 V13 Z" fill="#2ca02c"/><rect x="10.8" y="9" width="2.2" height="2.6" fill="#dcf0dc"/><circle cx="5" cy="4.4" r="3.8" fill="#d08820"/><circle cx="5.1" cy="5.2" r="2.6" fill="#f2c070"/><path d="M0.4 14 V11.2 C0.4 8.9 2.5 8.6 5 8.6 C7.5 8.6 9.6 8.9 9.6 11.2 V14 Z" fill="#3464cc"/><rect x="4" y="9.6" width="2.2" height="3" fill="#e4ecfa"/></svg></div><span>Formatting the Project Variance Report</span></div></div><div class="row alt" style="top:119px"><div class="cd"><div class="cb"></div></div><div class="cn"><div class="nt"><span class="ln" style="letter-spacing:0.040px;">Identify items you would like to appraise and report in terms of variance (usually they are tasks, project</span><span class="ln" style="letter-spacing:0.081px;">deliverables or some other working items);</span></div></div><div class="cs"><div class="doc"><svg width="14" height="17" viewBox="0 0 14 17"><path d="M0.5 0.5 H9 L12.5 4 V15.5 H0.5 Z" fill="url(#gD)" stroke="#9cb8dc" stroke-width="1"/><path d="M9 0.5 V4 H12.5 Z" fill="#6c98d0" stroke="#7ca4d8" stroke-width="0.6"/></svg></div><span style="letter-spacing:-0.150px;">Created</span></div><div class="cc"><div class="ci"><svg width="17" height="14" viewBox="0 0 17 14"><circle cx="11.9" cy="4" r="3.7" fill="#6a2c10"/><circle cx="12" cy="4.8" r="2.5" fill="#d8642c"/><path d="M7.5 13 V10.6 C7.5 8.4 9.5 8 12 8 C14.5 8 16.6 8.4 16.6 10.6 V13 Z" fill="#2ca02c"/><rect x="10.8" y="9" width="2.2" height="2.6" fill="#dcf0dc"/><circle cx="5" cy="4.4" r="3.8" fill="#d08820"/><circle cx="5.1" cy="5.2" r="2.6" fill="#f2c070"/><path d="M0.4 14 V11.2 C0.4 8.9 2.5 8.6 5 8.6 C7.5 8.6 9.6 8.9 9.6 11.2 V14 Z" fill="#3464cc"/><rect x="4" y="9.6" width="2.2" height="3" fill="#e4ecfa"/></svg></div><span>Formatting the Project Variance Report</span></div></div><div class="row" style="top:159px"><div class="cd"><div class="cb"></div></div><div class="cn"><div class="nt"><span class="ln" style="letter-spacing:0.036px;">Create or select appropriate template for preparing your Project Variance Report - usually it is a tabular</span><span class="ln" style="letter-spacing:0.036px;">worksheet where you can list items to be analyzed and their related fields;</span></div></div><div class="cs"><div class="doc"><svg width="14" height="17" viewBox="0 0 14 17"><path d="M0.5 0.5 H9 L12.5 4 V15.5 H0.5 Z" fill="url(#gD)" stroke="#9cb8dc" stroke-width="1"/><path d="M9 0.5 V4 H12.5 Z" fill="#6c98d0" stroke="#7ca4d8" stroke-width="0.6"/></svg></div><span style="letter-spacing:-0.150px;">Created</span></div><div class="cc"><div class="ci"><svg width="17" height="14" viewBox="0 0 17 14"><circle cx="11.9" cy="4" r="3.7" fill="#6a2c10"/><circle cx="12" cy="4.8" r="2.5" fill="#d8642c"/><path d="M7.5 13 V10.6 C7.5 8.4 9.5 8 12 8 C14.5 8 16.6 8.4 16.6 10.6 V13 Z" fill="#2ca02c"/><rect x="10.8" y="9" width="2.2" height="2.6" fill="#dcf0dc"/><circle cx="5" cy="4.4" r="3.8" fill="#d08820"/><circle cx="5.1" cy="5.2" r="2.6" fill="#f2c070"/><path d="M0.4 14 V11.2 C0.4 8.9 2.5 8.6 5 8.6 C7.5 8.6 9.6 8.9 9.6 11.2 V14 Z" fill="#3464cc"/><rect x="4" y="9.6" width="2.2" height="3" fill="#e4ecfa"/></svg></div><span>Formatting the Project Variance Report</span></div></div><div class="row alt" style="top:199px"><div class="cd"><div class="cb"></div></div><div class="cn"><div class="nt"><span class="ln">Ascertain your template of Project Variance Report has the space (a special column) to record</span><span class="ln" style="letter-spacing:0.021px;">Description or Name of the items to be attributed and reported, let&#x27;s say a task name;</span></div></div><div class="cs"><div class="doc"><svg width="14" height="17" viewBox="0 0 14 17"><path d="M0.5 0.5 H9 L12.5 4 V15.5 H0.5 Z" fill="url(#gD)" stroke="#9cb8dc" stroke-width="1"/><path d="M9 0.5 V4 H12.5 Z" fill="#6c98d0" stroke="#7ca4d8" stroke-width="0.6"/></svg></div><span style="letter-spacing:-0.150px;">Created</span></div><div class="cc"><div class="ci"><svg width="17" height="14" viewBox="0 0 17 14"><circle cx="11.9" cy="4" r="3.7" fill="#6a2c10"/><circle cx="12" cy="4.8" r="2.5" fill="#d8642c"/><path d="M7.5 13 V10.6 C7.5 8.4 9.5 8 12 8 C14.5 8 16.6 8.4 16.6 10.6 V13 Z" fill="#2ca02c"/><rect x="10.8" y="9" width="2.2" height="2.6" fill="#dcf0dc"/><circle cx="5" cy="4.4" r="3.8" fill="#d08820"/><circle cx="5.1" cy="5.2" r="2.6" fill="#f2c070"/><path d="M0.4 14 V11.2 C0.4 8.9 2.5 8.6 5 8.6 C7.5 8.6 9.6 8.9 9.6 11.2 V14 Z" fill="#3464cc"/><rect x="4" y="9.6" width="2.2" height="3" fill="#e4ecfa"/></svg></div><span>Formatting the Project Variance Report</span></div></div><div class="row" style="top:239px"><div class="cd"><div class="cb"></div></div><div class="cn"><div class="nt"><span class="ln" style="letter-spacing:0.018px;">Make sure it has a column of fields to record planned values of the targeted attribute (e.g. costs,</span><span class="ln" style="letter-spacing:0.036px;">duration, etc) - blank fields should go in line against every field for item name;</span></div></div><div class="cs"><div class="doc"><svg width="14" height="17" viewBox="0 0 14 17"><path d="M0.5 0.5 H9 L12.5 4 V15.5 H0.5 Z" fill="url(#gD)" stroke="#9cb8dc" stroke-width="1"/><path d="M9 0.5 V4 H12.5 Z" fill="#6c98d0" stroke="#7ca4d8" stroke-width="0.6"/></svg></div><span style="letter-spacing:-0.150px;">Created</span></div><div class="cc"><div class="ci"><svg width="17" height="14" viewBox="0 0 17 14"><circle cx="11.9" cy="4" r="3.7" fill="#6a2c10"/><circle cx="12" cy="4.8" r="2.5" fill="#d8642c"/><path d="M7.5 13 V10.6 C7.5 8.4 9.5 8 12 8 C14.5 8 16.6 8.4 16.6 10.6 V13 Z" fill="#2ca02c"/><rect x="10.8" y="9" width="2.2" height="2.6" fill="#dcf0dc"/><circle cx="5" cy="4.4" r="3.8" fill="#d08820"/><circle cx="5.1" cy="5.2" r="2.6" fill="#f2c070"/><path d="M0.4 14 V11.2 C0.4 8.9 2.5 8.6 5 8.6 C7.5 8.6 9.6 8.9 9.6 11.2 V14 Z" fill="#3464cc"/><rect x="4" y="9.6" width="2.2" height="3" fill="#e4ecfa"/></svg></div><span>Formatting the Project Variance Report</span></div></div><div class="row alt" style="top:279px"><div class="cd"><div class="cb"></div></div><div class="cn"><div class="nt"><span class="ln" style="letter-spacing:0.019px;">Check if it also has a column of fields to capture actual values of this attribute(s);</span></div></div><div class="cs"><div class="doc"><svg width="14" height="17" viewBox="0 0 14 17"><path d="M0.5 0.5 H9 L12.5 4 V15.5 H0.5 Z" fill="url(#gD)" stroke="#9cb8dc" stroke-width="1"/><path d="M9 0.5 V4 H12.5 Z" fill="#6c98d0" stroke="#7ca4d8" stroke-width="0.6"/></svg></div><span style="letter-spacing:-0.150px;">Created</span></div><div class="cc"><div class="ci"><svg width="17" height="14" viewBox="0 0 17 14"><circle cx="11.9" cy="4" r="3.7" fill="#6a2c10"/><circle cx="12" cy="4.8" r="2.5" fill="#d8642c"/><path d="M7.5 13 V10.6 C7.5 8.4 9.5 8 12 8 C14.5 8 16.6 8.4 16.6 10.6 V13 Z" fill="#2ca02c"/><rect x="10.8" y="9" width="2.2" height="2.6" fill="#dcf0dc"/><circle cx="5" cy="4.4" r="3.8" fill="#d08820"/><circle cx="5.1" cy="5.2" r="2.6" fill="#f2c070"/><path d="M0.4 14 V11.2 C0.4 8.9 2.5 8.6 5 8.6 C7.5 8.6 9.6 8.9 9.6 11.2 V14 Z" fill="#3464cc"/><rect x="4" y="9.6" width="2.2" height="3" fill="#e4ecfa"/></svg></div><span>Formatting the Project Variance Report</span></div></div><div class="row" style="top:319px"><div class="cd"><div class="cb"></div></div><div class="cn"><div class="nt"><span class="ln" style="letter-spacing:-0.036px;">Ensure it has a column for recording calculated values of variance/slippage (can be computed as equal to</span><span class="ln" style="letter-spacing:-0.072px;">planned values minus actual values);</span></div></div><div class="cs"><div class="doc"><svg width="14" height="17" viewBox="0 0 14 17"><path d="M0.5 0.5 H9 L12.5 4 V15.5 H0.5 Z" fill="url(#gD)" stroke="#9cb8dc" stroke-width="1"/><path d="M9 0.5 V4 H12.5 Z" fill="#6c98d0" stroke="#7ca4d8" stroke-width="0.6"/></svg></div><span style="letter-spacing:-0.150px;">Created</span></div><div class="cc"><div class="ci"><svg width="17" height="14" viewBox="0 0 17 14"><circle cx="11.9" cy="4" r="3.7" fill="#6a2c10"/><circle cx="12" cy="4.8" r="2.5" fill="#d8642c"/><path d="M7.5 13 V10.6 C7.5 8.4 9.5 8 12 8 C14.5 8 16.6 8.4 16.6 10.6 V13 Z" fill="#2ca02c"/><rect x="10.8" y="9" width="2.2" height="2.6" fill="#dcf0dc"/><circle cx="5" cy="4.4" r="3.8" fill="#d08820"/><circle cx="5.1" cy="5.2" r="2.6" fill="#f2c070"/><path d="M0.4 14 V11.2 C0.4 8.9 2.5 8.6 5 8.6 C7.5 8.6 9.6 8.9 9.6 11.2 V14 Z" fill="#3464cc"/><rect x="4" y="9.6" width="2.2" height="3" fill="#e4ecfa"/></svg></div><span>Formatting the Project Variance Report</span></div></div><div class="row alt" style="top:359px"><div class="cd"><div class="cb"></div></div><div class="cn"><div class="nt"><span class="ln" style="letter-spacing:-0.017px;">Additionally you may have a column of fields to record personal responsibilities for each task;</span></div></div><div class="cs"><div class="doc"><svg width="14" height="17" viewBox="0 0 14 17"><path d="M0.5 0.5 H9 L12.5 4 V15.5 H0.5 Z" fill="url(#gD)" stroke="#9cb8dc" stroke-width="1"/><path d="M9 0.5 V4 H12.5 Z" fill="#6c98d0" stroke="#7ca4d8" stroke-width="0.6"/></svg></div><span style="letter-spacing:-0.150px;">Created</span></div><div class="cc"><div class="ci"><svg width="17" height="14" viewBox="0 0 17 14"><circle cx="11.9" cy="4" r="3.7" fill="#6a2c10"/><circle cx="12" cy="4.8" r="2.5" fill="#d8642c"/><path d="M7.5 13 V10.6 C7.5 8.4 9.5 8 12 8 C14.5 8 16.6 8.4 16.6 10.6 V13 Z" fill="#2ca02c"/><rect x="10.8" y="9" width="2.2" height="2.6" fill="#dcf0dc"/><circle cx="5" cy="4.4" r="3.8" fill="#d08820"/><circle cx="5.1" cy="5.2" r="2.6" fill="#f2c070"/><path d="M0.4 14 V11.2 C0.4 8.9 2.5 8.6 5 8.6 C7.5 8.6 9.6 8.9 9.6 11.2 V14 Z" fill="#3464cc"/><rect x="4" y="9.6" width="2.2" height="3" fill="#e4ecfa"/></svg></div><span>Formatting the Project Variance Report</span></div></div><div class="row" style="top:399px"><div class="cd"><div class="cb"></div></div><div class="cn"><div class="nt"><span class="ln" style="letter-spacing:-0.038px;">Check whether you have a place for Comments and anything else you may need in your report;</span></div></div><div class="cs"><div class="doc"><svg width="14" height="17" viewBox="0 0 14 17"><path d="M0.5 0.5 H9 L12.5 4 V15.5 H0.5 Z" fill="url(#gD)" stroke="#9cb8dc" stroke-width="1"/><path d="M9 0.5 V4 H12.5 Z" fill="#6c98d0" stroke="#7ca4d8" stroke-width="0.6"/></svg></div><span style="letter-spacing:-0.150px;">Created</span></div><div class="cc"><div class="ci"><svg width="17" height="14" viewBox="0 0 17 14"><circle cx="11.9" cy="4" r="3.7" fill="#6a2c10"/><circle cx="12" cy="4.8" r="2.5" fill="#d8642c"/><path d="M7.5 13 V10.6 C7.5 8.4 9.5 8 12 8 C14.5 8 16.6 8.4 16.6 10.6 V13 Z" fill="#2ca02c"/><rect x="10.8" y="9" width="2.2" height="2.6" fill="#dcf0dc"/><circle cx="5" cy="4.4" r="3.8" fill="#d08820"/><circle cx="5.1" cy="5.2" r="2.6" fill="#f2c070"/><path d="M0.4 14 V11.2 C0.4 8.9 2.5 8.6 5 8.6 C7.5 8.6 9.6 8.9 9.6 11.2 V14 Z" fill="#3464cc"/><rect x="4" y="9.6" width="2.2" height="3" fill="#e4ecfa"/></svg></div><span>Formatting the Project Variance Report</span></div></div><div class="row alt" style="top:439px"><div class="cd"><div class="cb"></div></div><div class="cn"><div class="nt"><span class="ln">Create a paper copy of the template, or develop electronic spreadsheet-based solution;</span></div></div><div class="cs"><div class="doc"><svg width="14" height="17" viewBox="0 0 14 17"><path d="M0.5 0.5 H9 L12.5 4 V15.5 H0.5 Z" fill="url(#gD)" stroke="#9cb8dc" stroke-width="1"/><path d="M9 0.5 V4 H12.5 Z" fill="#6c98d0" stroke="#7ca4d8" stroke-width="0.6"/></svg></div><span style="letter-spacing:-0.150px;">Created</span></div><div class="cc"><div class="ci"><svg width="17" height="14" viewBox="0 0 17 14"><circle cx="11.9" cy="4" r="3.7" fill="#6a2c10"/><circle cx="12" cy="4.8" r="2.5" fill="#d8642c"/><path d="M7.5 13 V10.6 C7.5 8.4 9.5 8 12 8 C14.5 8 16.6 8.4 16.6 10.6 V13 Z" fill="#2ca02c"/><rect x="10.8" y="9" width="2.2" height="2.6" fill="#dcf0dc"/><circle cx="5" cy="4.4" r="3.8" fill="#d08820"/><circle cx="5.1" cy="5.2" r="2.6" fill="#f2c070"/><path d="M0.4 14 V11.2 C0.4 8.9 2.5 8.6 5 8.6 C7.5 8.6 9.6 8.9 9.6 11.2 V14 Z" fill="#3464cc"/><rect x="4" y="9.6" width="2.2" height="3" fill="#e4ecfa"/></svg></div><span>Formatting the Project Variance Report</span></div></div><div class="grp" style="top:479px"><div class="minus"><i></i></div><span style="letter-spacing:-0.017px;">Category: Filling the Project Variance Report</span></div><div class="row alt g2" style="top:499px"><div class="cd"><div class="cb"></div></div><div class="cn"><div class="nt"><span class="ln" style="letter-spacing:0.032px;">Identify frequency and time periods when you would like the reports to be filled and submitted for</span><span class="ln" style="letter-spacing:0.038px;">analysis (for example every week or since certain project stage is over);</span></div></div><div class="cs"><div class="doc"><svg width="14" height="17" viewBox="0 0 14 17"><path d="M0.5 0.5 H9 L12.5 4 V15.5 H0.5 Z" fill="url(#gD)" stroke="#9cb8dc" stroke-width="1"/><path d="M9 0.5 V4 H12.5 Z" fill="#6c98d0" stroke="#7ca4d8" stroke-width="0.6"/></svg></div><span style="letter-spacing:-0.150px;">Created</span></div><div class="cc"><div class="ci"><svg width="17" height="14" viewBox="0 0 17 14"><path d="M1 2.8 C3.4 2 5.6 3 8 5.2 L8 12.6 C5.6 10.6 3.8 10.2 2 10.8 Z" fill="#fffbf2" stroke="#d69a58" stroke-width="0.8"/><path d="M8 5.2 C10.4 2.8 13 2 15.6 2.8 L14.6 10.6 C12.4 10.2 10.4 10.6 8 12.6 Z" fill="#ffffff" stroke="#e2a458" stroke-width="0.8"/><path d="M6.6 5.4 L9.6 4.6 L10 10.8 L7.4 12 Z" fill="#7ab6ea" fill-opacity="0.9"/><path d="M10.8 5.2 L13.6 4.2 M10.8 7.2 L13.4 6.4 M10.8 9.2 L13 8.6" stroke="#a8cdf0" stroke-width="0.7"/><path d="M0.9 3 L1.9 10.6" stroke="#b09a66" stroke-width="1"/></svg></div><span style="letter-spacing:-0.023px;">Filling the Project Variance Report</span></div></div><div class="row g2" style="top:539px"><div class="cd"><div class="cb"></div></div><div class="cn"><div class="nt"><span class="ln" style="letter-spacing:-0.023px;">Record the planned values into appropriate fields in your Project Variance Report;</span></div></div><div class="cs"><div class="doc"><svg width="14" height="17" viewBox="0 0 14 17"><path d="M0.5 0.5 H9 L12.5 4 V15.5 H0.5 Z" fill="url(#gD)" stroke="#9cb8dc" stroke-width="1"/><path d="M9 0.5 V4 H12.5 Z" fill="#6c98d0" stroke="#7ca4d8" stroke-width="0.6"/></svg></div><span style="letter-spacing:-0.150px;">Created</span></div><div class="cc"><div class="ci"><svg width="17" height="14" viewBox="0 0 17 14"><path d="M1 2.8 C3.4 2 5.6 3 8 5.2 L8 12.6 C5.6 10.6 3.8 10.2 2 10.8 Z" fill="#fffbf2" stroke="#d69a58" stroke-width="0.8"/><path d="M8 5.2 C10.4 2.8 13 2 15.6 2.8 L14.6 10.6 C12.4 10.2 10.4 10.6 8 12.6 Z" fill="#ffffff" stroke="#e2a458" stroke-width="0.8"/><path d="M6.6 5.4 L9.6 4.6 L10 10.8 L7.4 12 Z" fill="#7ab6ea" fill-opacity="0.9"/><path d="M10.8 5.2 L13.6 4.2 M10.8 7.2 L13.4 6.4 M10.8 9.2 L13 8.6" stroke="#a8cdf0" stroke-width="0.7"/><path d="M0.9 3 L1.9 10.6" stroke="#b09a66" stroke-width="1"/></svg></div><span style="letter-spacing:-0.023px;">Filling the Project Variance Report</span></div></div><div class="row alt g2" style="top:579px"><div class="cd"><div class="cb"></div></div><div class="cn"><div class="nt"><span class="ln">Measure the actual values and record them into appropriate fields against the planned ones;</span></div></div><div class="cs"><div class="doc"><svg width="14" height="17" viewBox="0 0 14 17"><path d="M0.5 0.5 H9 L12.5 4 V15.5 H0.5 Z" fill="url(#gD)" stroke="#9cb8dc" stroke-width="1"/><path d="M9 0.5 V4 H12.5 Z" fill="#6c98d0" stroke="#7ca4d8" stroke-width="0.6"/></svg></div><span style="letter-spacing:-0.150px;">Created</span></div><div class="cc"><div class="ci"><svg width="17" height="14" viewBox="0 0 17 14"><path d="M1 2.8 C3.4 2 5.6 3 8 5.2 L8 12.6 C5.6 10.6 3.8 10.2 2 10.8 Z" fill="#fffbf2" stroke="#d69a58" stroke-width="0.8"/><path d="M8 5.2 C10.4 2.8 13 2 15.6 2.8 L14.6 10.6 C12.4 10.2 10.4 10.6 8 12.6 Z" fill="#ffffff" stroke="#e2a458" stroke-width="0.8"/><path d="M6.6 5.4 L9.6 4.6 L10 10.8 L7.4 12 Z" fill="#7ab6ea" fill-opacity="0.9"/><path d="M10.8 5.2 L13.6 4.2 M10.8 7.2 L13.4 6.4 M10.8 9.2 L13 8.6" stroke="#a8cdf0" stroke-width="0.7"/><path d="M0.9 3 L1.9 10.6" stroke="#b09a66" stroke-width="1"/></svg></div><span style="letter-spacing:-0.023px;">Filling the Project Variance Report</span></div></div><div class="row g2" style="top:619px"><div class="cd"><div class="cb"></div></div><div class="cn"><div class="nt"><span class="ln" style="letter-spacing:-0.030px;">Derive the variance between planned and actual values of targeted attributes by every analyzed item, and</span><span class="ln">then compute total values;</span></div></div><div class="cs"><div class="doc"><svg width="14" height="17" viewBox="0 0 14 17"><path d="M0.5 0.5 H9 L12.5 4 V15.5 H0.5 Z" fill="url(#gD)" stroke="#9cb8dc" stroke-width="1"/><path d="M9 0.5 V4 H12.5 Z" fill="#6c98d0" stroke="#7ca4d8" stroke-width="0.6"/></svg></div><span style="letter-spacing:-0.150px;">Created</span></div><div class="cc"><div class="ci"><svg width="17" height="14" viewBox="0 0 17 14"><path d="M1 2.8 C3.4 2 5.6 3 8 5.2 L8 12.6 C5.6 10.6 3.8 10.2 2 10.8 Z" fill="#fffbf2" stroke="#d69a58" stroke-width="0.8"/><path d="M8 5.2 C10.4 2.8 13 2 15.6 2.8 L14.6 10.6 C12.4 10.2 10.4 10.6 8 12.6 Z" fill="#ffffff" stroke="#e2a458" stroke-width="0.8"/><path d="M6.6 5.4 L9.6 4.6 L10 10.8 L7.4 12 Z" fill="#7ab6ea" fill-opacity="0.9"/><path d="M10.8 5.2 L13.6 4.2 M10.8 7.2 L13.4 6.4 M10.8 9.2 L13 8.6" stroke="#a8cdf0" stroke-width="0.7"/><path d="M0.9 3 L1.9 10.6" stroke="#b09a66" stroke-width="1"/></svg></div><span style="letter-spacing:-0.023px;">Filling the Project Variance Report</span></div></div><div class="row alt g2" style="top:659px"><div class="cd"><div class="cb"></div></div><div class="cn"><div class="nt"><span class="ln" style="letter-spacing:0.035px;">Evaluate the variance calculated to define whether it falls within project tolerance range;</span></div></div><div class="cs"><div class="doc"><svg width="14" height="17" viewBox="0 0 14 17"><path d="M0.5 0.5 H9 L12.5 4 V15.5 H0.5 Z" fill="url(#gD)" stroke="#9cb8dc" stroke-width="1"/><path d="M9 0.5 V4 H12.5 Z" fill="#6c98d0" stroke="#7ca4d8" stroke-width="0.6"/></svg></div><span style="letter-spacing:-0.150px;">Created</span></div><div class="cc"><div class="ci"><svg width="17" height="14" viewBox="0 0 17 14"><path d="M1 2.8 C3.4 2 5.6 3 8 5.2 L8 12.6 C5.6 10.6 3.8 10.2 2 10.8 Z" fill="#fffbf2" stroke="#d69a58" stroke-width="0.8"/><path d="M8 5.2 C10.4 2.8 13 2 15.6 2.8 L14.6 10.6 C12.4 10.2 10.4 10.6 8 12.6 Z" fill="#ffffff" stroke="#e2a458" stroke-width="0.8"/><path d="M6.6 5.4 L9.6 4.6 L10 10.8 L7.4 12 Z" fill="#7ab6ea" fill-opacity="0.9"/><path d="M10.8 5.2 L13.6 4.2 M10.8 7.2 L13.4 6.4 M10.8 9.2 L13 8.6" stroke="#a8cdf0" stroke-width="0.7"/><path d="M0.9 3 L1.9 10.6" stroke="#b09a66" stroke-width="1"/></svg></div><span style="letter-spacing:-0.023px;">Filling the Project Variance Report</span></div></div><div class="row g2" style="top:699px"><div class="cd"><div class="cb"></div></div><div class="cn"><div class="nt"><span class="ln">Submit the project variance report to the higher management for analysis and conclusions;</span></div></div><div class="cs"><div class="doc"><svg width="14" height="17" viewBox="0 0 14 17"><path d="M0.5 0.5 H9 L12.5 4 V15.5 H0.5 Z" fill="url(#gD)" stroke="#9cb8dc" stroke-width="1"/><path d="M9 0.5 V4 H12.5 Z" fill="#6c98d0" stroke="#7ca4d8" stroke-width="0.6"/></svg></div><span style="letter-spacing:-0.150px;">Created</span></div><div class="cc"><div class="ci"><svg width="17" height="14" viewBox="0 0 17 14"><path d="M1 2.8 C3.4 2 5.6 3 8 5.2 L8 12.6 C5.6 10.6 3.8 10.2 2 10.8 Z" fill="#fffbf2" stroke="#d69a58" stroke-width="0.8"/><path d="M8 5.2 C10.4 2.8 13 2 15.6 2.8 L14.6 10.6 C12.4 10.2 10.4 10.6 8 12.6 Z" fill="#ffffff" stroke="#e2a458" stroke-width="0.8"/><path d="M6.6 5.4 L9.6 4.6 L10 10.8 L7.4 12 Z" fill="#7ab6ea" fill-opacity="0.9"/><path d="M10.8 5.2 L13.6 4.2 M10.8 7.2 L13.4 6.4 M10.8 9.2 L13 8.6" stroke="#a8cdf0" stroke-width="0.7"/><path d="M0.9 3 L1.9 10.6" stroke="#b09a66" stroke-width="1"/></svg></div><span style="letter-spacing:-0.023px;">Filling the Project Variance Report</span></div></div></div><div class="gfoot"><div class="cnt"><span style="letter-spacing:-0.042px;">Count: 17</span></div></div><div class="vsb"><div class="up"></div><div class="thumb"><div class="gr"><i></i><i></i><i></i></div></div><div class="dn"></div></div></div>
<div id="filp" class="panel"><div class="phead"><span class="pt" style="letter-spacing:0.034px;">Filters Bar</span><div class="pmax" style="left:196px"><svg width="12" height="12" viewBox="0 0 12 12"><rect x="3.6" y="4.6" width="4.8" height="2.8" fill="#fff" stroke="#3c4658" stroke-width="1.3"/></svg></div><div class="pin" style="left:214px"><svg width="12" height="13" viewBox="0 0 12 13"><path d="M3.4 1 V3.8 L0.8 6.4 H10.2 L7.6 3.8 V1 Z" fill="#f4f4f4" stroke="#787878" stroke-width="0.9"/><path d="M6.3 1.4 V4.2 L8.2 6" stroke="#a0a0a0" stroke-width="1.3" fill="none"/><path d="M1.8 0.7 H9.2" stroke="#6c6c6c" stroke-width="1.2" fill="none"/><path d="M5.4 6.8 L5.1 12" stroke="#6c6c6c" stroke-width="1.1" fill="none"/></svg></div><div class="pclose" style="left:228px"><svg width="12" height="12" viewBox="0 0 12 12"><path d="M3.5 3.5 L8.5 8.5 M8.5 3.5 L3.5 8.5" stroke="#fff" stroke-width="2"/></svg></div></div><div class="ptool"><div class="grip" style="left:4px;top:6px;height:21px"></div><div class="combo2"><span style="display:inline-block;transform-origin:0 0;transform:scaleX(0.9108);">Custom</span><div class="cbtn2"><div class="tri7g" style="left:5px;top:6px"></div></div></div><div class="ic" style="left:106px;top:8px"><svg width="18" height="19" viewBox="0 0 18 19"><path d="M8.6 2 H14.2 L17 4.8 V15 H10 L8.6 12 Z" fill="#eef4fb" stroke="#b4c0d4" stroke-width="0.7"/><path d="M14.2 2 V4.8 H17" fill="none" stroke="#b4c0d4" stroke-width="0.7"/><path d="M12.6 5.6 L16.2 10 H14.2 V14.4 H11 V10 H9 Z" fill="#4cb84c" stroke="#2c9038" stroke-width="0.7"/><path d="M1.2 8.6 H8.8 V14.4 L7 17.6 H5.8 V14.8 H4 V17.6 H2.6 L1.2 14.4 Z" fill="#f0f1f8" stroke="#646c9c" stroke-opacity="0.9" stroke-width="0.9"/><path d="M1.6 13.6 L2.8 17.2 H3.8 V14.4 H6 V17.2 H6.8 L8.4 13.6" fill="#646c9c" fill-opacity="0.8"/></svg></div><div class="tri" style="left:126px;top:15px"></div><div class="ic" style="left:140px;top:8px"><svg width="18" height="18" viewBox="0 0 18 18"><path d="M2.2 10.4 L9.4 2.6 Q10.4 1.8 11.6 2.4 L15.6 4.6 Q16.8 5.6 15.8 6.8 L9.4 14 Q8.6 14.8 7.4 14.6 L3.4 13.6 Q1.4 12.4 2.2 10.4 Z" fill="#fafafa" stroke="#a4a4a4" stroke-width="0.9"/><path d="M2.4 10.6 L5 8 L10.6 11.6 L9 14 Q8 14.8 7 14.4 L3.4 13.4 Q1.8 12.4 2.4 10.6 Z" fill="#d8d8d8"/><path d="M5.4 15.6 H16.4" stroke="#909090" stroke-width="1.4"/></svg></div><div class="ic" style="left:164px;top:7px"><svg width="16" height="19" viewBox="0 0 16 19"><path d="M3.4 5.4 L12.6 15.6 M12.6 5.4 L3.4 15.6" stroke="#9c9c9c" stroke-opacity="0.55" stroke-width="3.8" stroke-linecap="round"/><path d="M3.4 5.4 L12.6 15.6 M12.6 5.4 L3.4 15.6" stroke="#c0c0c0" stroke-width="2.2" stroke-linecap="round"/></svg></div><div class="tri" style="left:187px;top:22px"></div></div><div class="fgrid"><div class="frow" style="top:0px"><div class="fl"><span style="display:inline-block;transform-origin:0 0;transform:scaleX(0.9507);">Completion</span></div><div class="fb"><div class="tri7" style="left:4px;top:7px"></div></div></div><div class="frow" style="top:21px"><div class="fl"><span style="display:inline-block;transform-origin:0 0;transform:scaleX(0.9573);">Due Date</span></div><div class="fb"><div class="tri7" style="left:4px;top:7px"></div></div></div><div class="frow" style="top:42px"><div class="fl"><span style="letter-spacing:-0.048px;">Status</span></div><div class="fb"><div class="tri7" style="left:4px;top:7px"></div></div></div><div class="frow" style="top:63px"><div class="fl"><span style="letter-spacing:-0.092px;">Priority</span></div><div class="fb"><div class="tri7" style="left:4px;top:7px"></div></div></div><div class="frow" style="top:84px"><div class="fl"><span style="display:inline-block;transform-origin:0 0;transform:scaleX(0.9358);">Task Name</span></div></div><div class="frow" style="top:105px"><div class="fl"><span style="letter-spacing:-0.053px;">Date Created</span></div><div class="fb"><div class="tri7" style="left:4px;top:7px"></div></div></div><div class="frow" style="top:126px"><div class="fl"><span style="display:inline-block;transform-origin:0 0;transform:scaleX(0.9431);">Date Last Modified</span></div><div class="fb"><div class="tri7" style="left:4px;top:7px"></div></div></div><div class="frow" style="top:147px"><div class="fl"><span style="display:inline-block;transform-origin:0 0;transform:scaleX(0.9689);">Date Opened</span></div><div class="fb"><div class="tri7" style="left:4px;top:7px"></div></div></div><div class="frow" style="top:168px"><div class="fl"><span style="display:inline-block;transform-origin:0 0;transform:scaleX(0.9660);">Date Completed</span></div><div class="fb"><div class="tri7" style="left:4px;top:7px"></div></div></div><div class="fsep"></div></div></div>
<div id="notep" class="panel"><div class="phead"><span class="pt">Note</span><div class="pmax" style="left:196px"><svg width="12" height="12" viewBox="0 0 12 12"><rect x="3.6" y="4.6" width="4.8" height="2.8" fill="#fff" stroke="#3c4658" stroke-width="1.3"/></svg></div><div class="pin" style="left:214px"><svg width="12" height="13" viewBox="0 0 12 13"><path d="M3.4 1 V3.8 L0.8 6.4 H10.2 L7.6 3.8 V1 Z" fill="#f4f4f4" stroke="#787878" stroke-width="0.9"/><path d="M6.3 1.4 V4.2 L8.2 6" stroke="#a0a0a0" stroke-width="1.3" fill="none"/><path d="M1.8 0.7 H9.2" stroke="#6c6c6c" stroke-width="1.2" fill="none"/><path d="M5.4 6.8 L5.1 12" stroke="#6c6c6c" stroke-width="1.1" fill="none"/></svg></div><div class="pclose" style="left:228px"><svg width="12" height="12" viewBox="0 0 12 12"><path d="M3.5 3.5 L8.5 8.5 M8.5 3.5 L3.5 8.5" stroke="#fff" stroke-width="2"/></svg></div></div><div class="ptool"><div class="grip" style="left:4px;top:6px;height:21px"></div><div class="ic" style="left:13px;top:7px"><svg width="18" height="19" viewBox="0 0 18 19"><path d="M8.6 2 H14.2 L17 4.8 V15 H10 L8.6 12 Z" fill="#f4f4f4" stroke="#c8c8c8" stroke-width="0.7"/><path d="M14.2 2 V4.8 H17" fill="none" stroke="#c8c8c8" stroke-width="0.7"/><path d="M12.6 5.6 L16.2 10 H14.2 V14.4 H11 V10 H9 Z" fill="#c0c0c0" stroke="#a8a8a8" stroke-width="0.7"/><path d="M1.2 8.6 H8.8 V14.4 L7 17.6 H5.8 V14.8 H4 V17.6 H2.6 L1.2 14.4 Z" fill="#f0f1f8" stroke="#b4b4b4" stroke-opacity="0.9" stroke-width="0.9"/><path d="M1.6 13.6 L2.8 17.2 H3.8 V14.4 H6 V17.2 H6.8 L8.4 13.6" fill="#b4b4b4" fill-opacity="0.8"/></svg></div><div class="sep" style="left:36px;top:7px;height:20px"></div><div class="ic" style="left:44px;top:7px"><svg width="16" height="19" viewBox="0 0 16 19"><path d="M1.8 3.2 H10 L13.6 6.2 V17.4 H1.8 Z" fill="url(#gPg)" stroke="#c0c8d8" stroke-width="0.8"/><path d="M13.7 5.5 V17.5 H2" stroke="#687080" stroke-width="1.1" fill="none"/><circle cx="7.3" cy="10.3" r="3.9" fill="#d6ecf8" fill-opacity="0.9" stroke="#a0cce8" stroke-width="1.3"/><path d="M10.2 13.4 L13 16.8" stroke="#e0a868" stroke-width="1.7"/></svg></div><div class="ic" style="left:67px;top:7px"><svg width="16" height="19" viewBox="0 0 16 19"><rect x="4" y="3" width="8.4" height="5.4" fill="#fdfdfd" stroke="#8c94a0" stroke-width="0.9"/><path d="M1.4 8.6 H14.4 V14 H1.4 Z" fill="#dfe1e6" stroke="#808894" stroke-width="0.9"/><path d="M1.8 10.6 H14" stroke="#a0a6b0" stroke-width="1.3"/><path d="M12.6 3 V8 M14.5 8.6 V14" stroke="#5c646c" stroke-width="0.9"/><rect x="3.6" y="12.4" width="9" height="5" fill="#fff" stroke="#7c848e" stroke-width="0.9"/><path d="M3.4 17.5 H12.8" stroke="#505860" stroke-width="1.1"/></svg></div><div class="sep" style="left:89px;top:7px;height:20px"></div><div class="ic" style="left:96px;top:8px"><svg width="16" height="18" viewBox="0 0 16 18"><rect x="1.5" y="2.5" width="13" height="13" rx="1.5" fill="#f0f0ee" stroke="#c8c8c4" stroke-width="1"/><text x="8" y="13.3" text-anchor="middle" font-family="Liberation Serif" font-size="12.5" font-weight="bold"  fill="#b6b4a8">B</text></svg></div><div class="ic" style="left:120px;top:8px"><svg width="16" height="18" viewBox="0 0 16 18"><rect x="1.5" y="2.5" width="13" height="13" rx="1.5" fill="#f0f0ee" stroke="#c8c8c4" stroke-width="1"/><text x="8" y="13.3" text-anchor="middle" font-family="Liberation Serif" font-size="12.5" font-weight="bold" font-style="italic" fill="#b6b4a8">I</text></svg></div><div class="sep" style="left:142px;top:7px;height:20px"></div><div class="ic" style="left:150px;top:8px"><svg width="16" height="18" viewBox="0 0 16 18"><rect x="1.5" y="2.5" width="13" height="13" rx="1.5" fill="#fafafa" stroke="#a8a8a8" stroke-width="1"/><path d="M3.5 5.5 H12.5 M3.5 7.5 H10 M3.5 9.5 H12.5 M3.5 11.5 H10 M3.5 13.5 H12.5" stroke="#707070" stroke-width="1"/></svg></div><div class="ic" style="left:173px;top:8px"><svg width="16" height="18" viewBox="0 0 16 18"><rect x="1.5" y="2.5" width="13" height="13" rx="1.5" fill="#f6f6f4" stroke="#c8c8c4" stroke-width="1"/><path d="M3.5 5.5 H12.5 M5 7.5 H11 M3.5 9.5 H12.5 M5 11.5 H11 M3.5 13.5 H12.5" stroke="#b0b0a8" stroke-width="1"/></svg></div><div class="ic" style="left:196px;top:8px"><svg width="17" height="18" viewBox="0 0 17 18"><path d="M6 3.8 H15.5 M6 8.9 H15.5 M6 14 H15.5" stroke="#a4a4a4" stroke-width="1.8"/><circle cx="2.8" cy="3.8" r="1.7" fill="#9c9c9c"/><circle cx="2.8" cy="8.9" r="1.7" fill="#9c9c9c"/><circle cx="2.8" cy="14" r="1.7" fill="#9c9c9c"/></svg></div><div class="chev" style="top:8px"><svg width="9" height="7" viewBox="0 0 9 7"><path d="M0.8 0.8 L3.6 3.5 L0.8 6.2 M4.8 0.8 L7.6 3.5 L4.8 6.2" stroke="#000" stroke-width="1.4" fill="none"/></svg></div><div class="tri" style="left:236px;top:22px"></div></div><div class="nbody"></div><div class="wm">todolistsoft.com</div></div>
<div id="lstrip"></div><div id="tline"></div><div id="vline"></div><div id="splitgrip"><i></i><i></i><i></i></div>
</body></html>
